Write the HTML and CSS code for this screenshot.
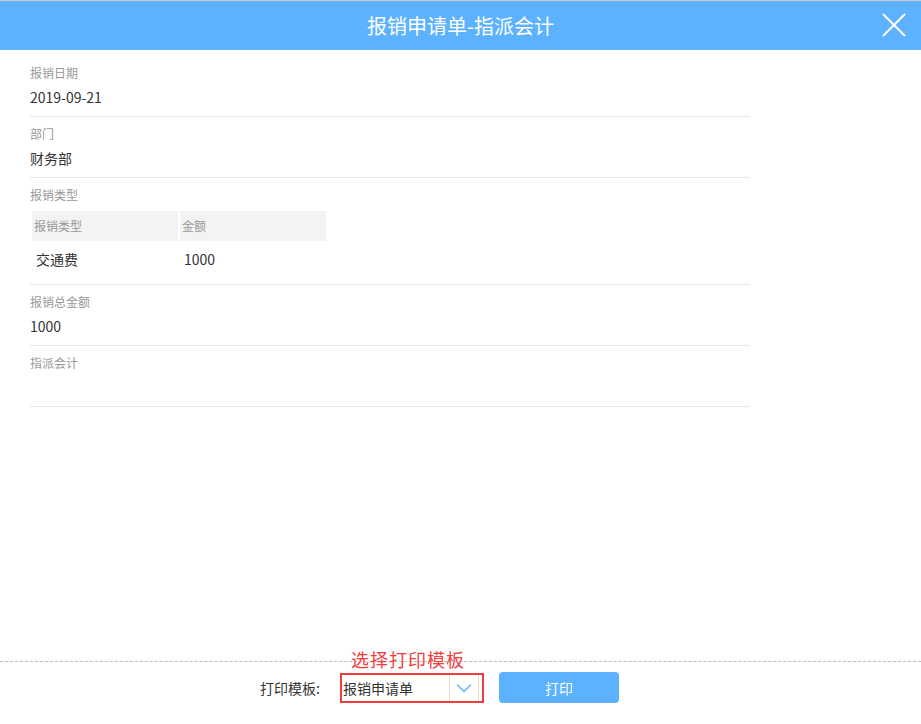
FILE: index.html
```html
<!DOCTYPE html>
<html lang="zh-CN">
<head>
<meta charset="utf-8">
<title>报销申请单-指派会计</title>
<link rel="stylesheet" href="styles.css">
</head>
<body>
<div class="page">
  <div class="topline"></div>
  <header class="header">
    <h1 class="title">报销申请单-指派会计</h1>
    <button class="close" aria-label="关闭">
      <svg width="24" height="24" viewBox="0 0 24 24"><path d="M1 1 L23 23 M23 1 L1 23" stroke="#fff" stroke-width="2" fill="none"/></svg>
    </button>
  </header>
  <main class="content">
    <div class="field">
      <div class="label">报销日期</div>
      <div class="value">2019-09-21</div>
    </div>
    <div class="field">
      <div class="label">部门</div>
      <div class="value">财务部</div>
    </div>
    <div class="field">
      <div class="label">报销类型</div>
      <div class="table">
        <div class="th">报销类型</div>
        <div class="th">金额</div>
        <div class="td">交通费</div>
        <div class="td">1000</div>
      </div>
    </div>
    <div class="field">
      <div class="label">报销总金额</div>
      <div class="value">1000</div>
    </div>
    <div class="field">
      <div class="label">指派会计</div>
      <div class="value"></div>
    </div>
  </main>
  <footer class="footer">
    <span class="flabel">打印模板:</span>
    <div class="select-wrap">
      <span class="annot">选择打印模板</span>
      <div class="select">
        <span class="select-text">报销申请单</span>
        <span class="select-arrow">
          <svg width="16" height="10" viewBox="0 0 16 10"><path d="M1 1.5 L8 8.5 L15 1.5" stroke="#5cb2ff" stroke-width="1.3" fill="none"/></svg>
        </span>
      </div>
    </div>
    <button class="print">打印</button>
  </footer>
</div>
</body>
</html>
```
FILE: styles.css
```css
* { box-sizing: border-box; }
html, body { margin: 0; padding: 0; }
body {
  font-family: "Noto Sans CJK SC", "Microsoft YaHei", sans-serif;
  color: #333;
  background: #fff;
}
.page {
  height: 724px;
  display: flex;
  flex-direction: column;
}
.topline { height: 1px; background: #c9c9c9; }
.header {
  height: 49px;
  background: #5cb2ff;
  display: flex;
  align-items: center;
  justify-content: center;
  position: relative;
}
.title {
  margin: 0;
  font-size: 20px;
  font-weight: normal;
  color: #fff;
  line-height: 28px;
}
.close {
  position: absolute;
  right: 15px;
  top: 12px;
  width: 24px;
  height: 24px;
  padding: 0;
  border: 0;
  background: transparent;
}
.close svg { display: block; }
.content {
  flex: 1;
  padding: 6px 0 0 30px;
}
.field {
  width: 720px;
  padding: 7px 0 7px;
  border-bottom: 1px solid #e8e8e8;
}
.label {
  font-size: 12px;
  color: #999;
  line-height: 20px;
}
.value {
  font-size: 14px;
  color: #333;
  line-height: 24px;
  height: 24px;
  margin-top: 2px;
}
.table {
  display: grid;
  grid-template-columns: 146px 146px;
  gap: 2px;
  padding: 2px;
  margin-top: 4px;
}
.th {
  background: #f3f3f3;
  height: 30px;
  line-height: 30px;
  font-size: 12px;
  color: #999;
  padding-left: 2px;
}
.td {
  height: 32px;
  line-height: 32px;
  font-size: 14px;
  color: #333;
  padding-left: 4px;
}
.footer {
  height: 63px;
  border-top: 1px dashed #bdbdbd;
  display: flex;
  align-items: center;
  padding-left: 260px;
  padding-bottom: 11px;
}
.flabel {
  font-size: 14px;
  color: #333;
  width: 80px;
}
.select-wrap { position: relative; }
.annot {
  position: absolute;
  left: 11px;
  top: -26px;
  font-size: 18px;
  color: #f23d3d;
  white-space: nowrap;
  line-height: 24px;
  letter-spacing: 1px;
}
.select {
  width: 144px;
  height: 30px;
  border: 2px solid #f23d3d;
  display: flex;
  align-items: stretch;
}
.select-text {
  flex: 1;
  font-size: 14px;
  line-height: 26px;
  padding-left: 1px;
  color: #333;
}
.select-arrow {
  width: 30px;
  border-left: 1px solid #ddd;
  border-right: 1px solid #ddd;
  display: flex;
  align-items: center;
  justify-content: center;
  margin-right: 3px;
}
.select-arrow svg { display: block; }
.print {
  margin-left: 15px;
  width: 120px;
  height: 31px;
  border: 0;
  border-radius: 4px;
  background: #5cb2ff;
  color: #fff;
  font-family: inherit;
  font-size: 14px;
  padding: 0;
}
```
